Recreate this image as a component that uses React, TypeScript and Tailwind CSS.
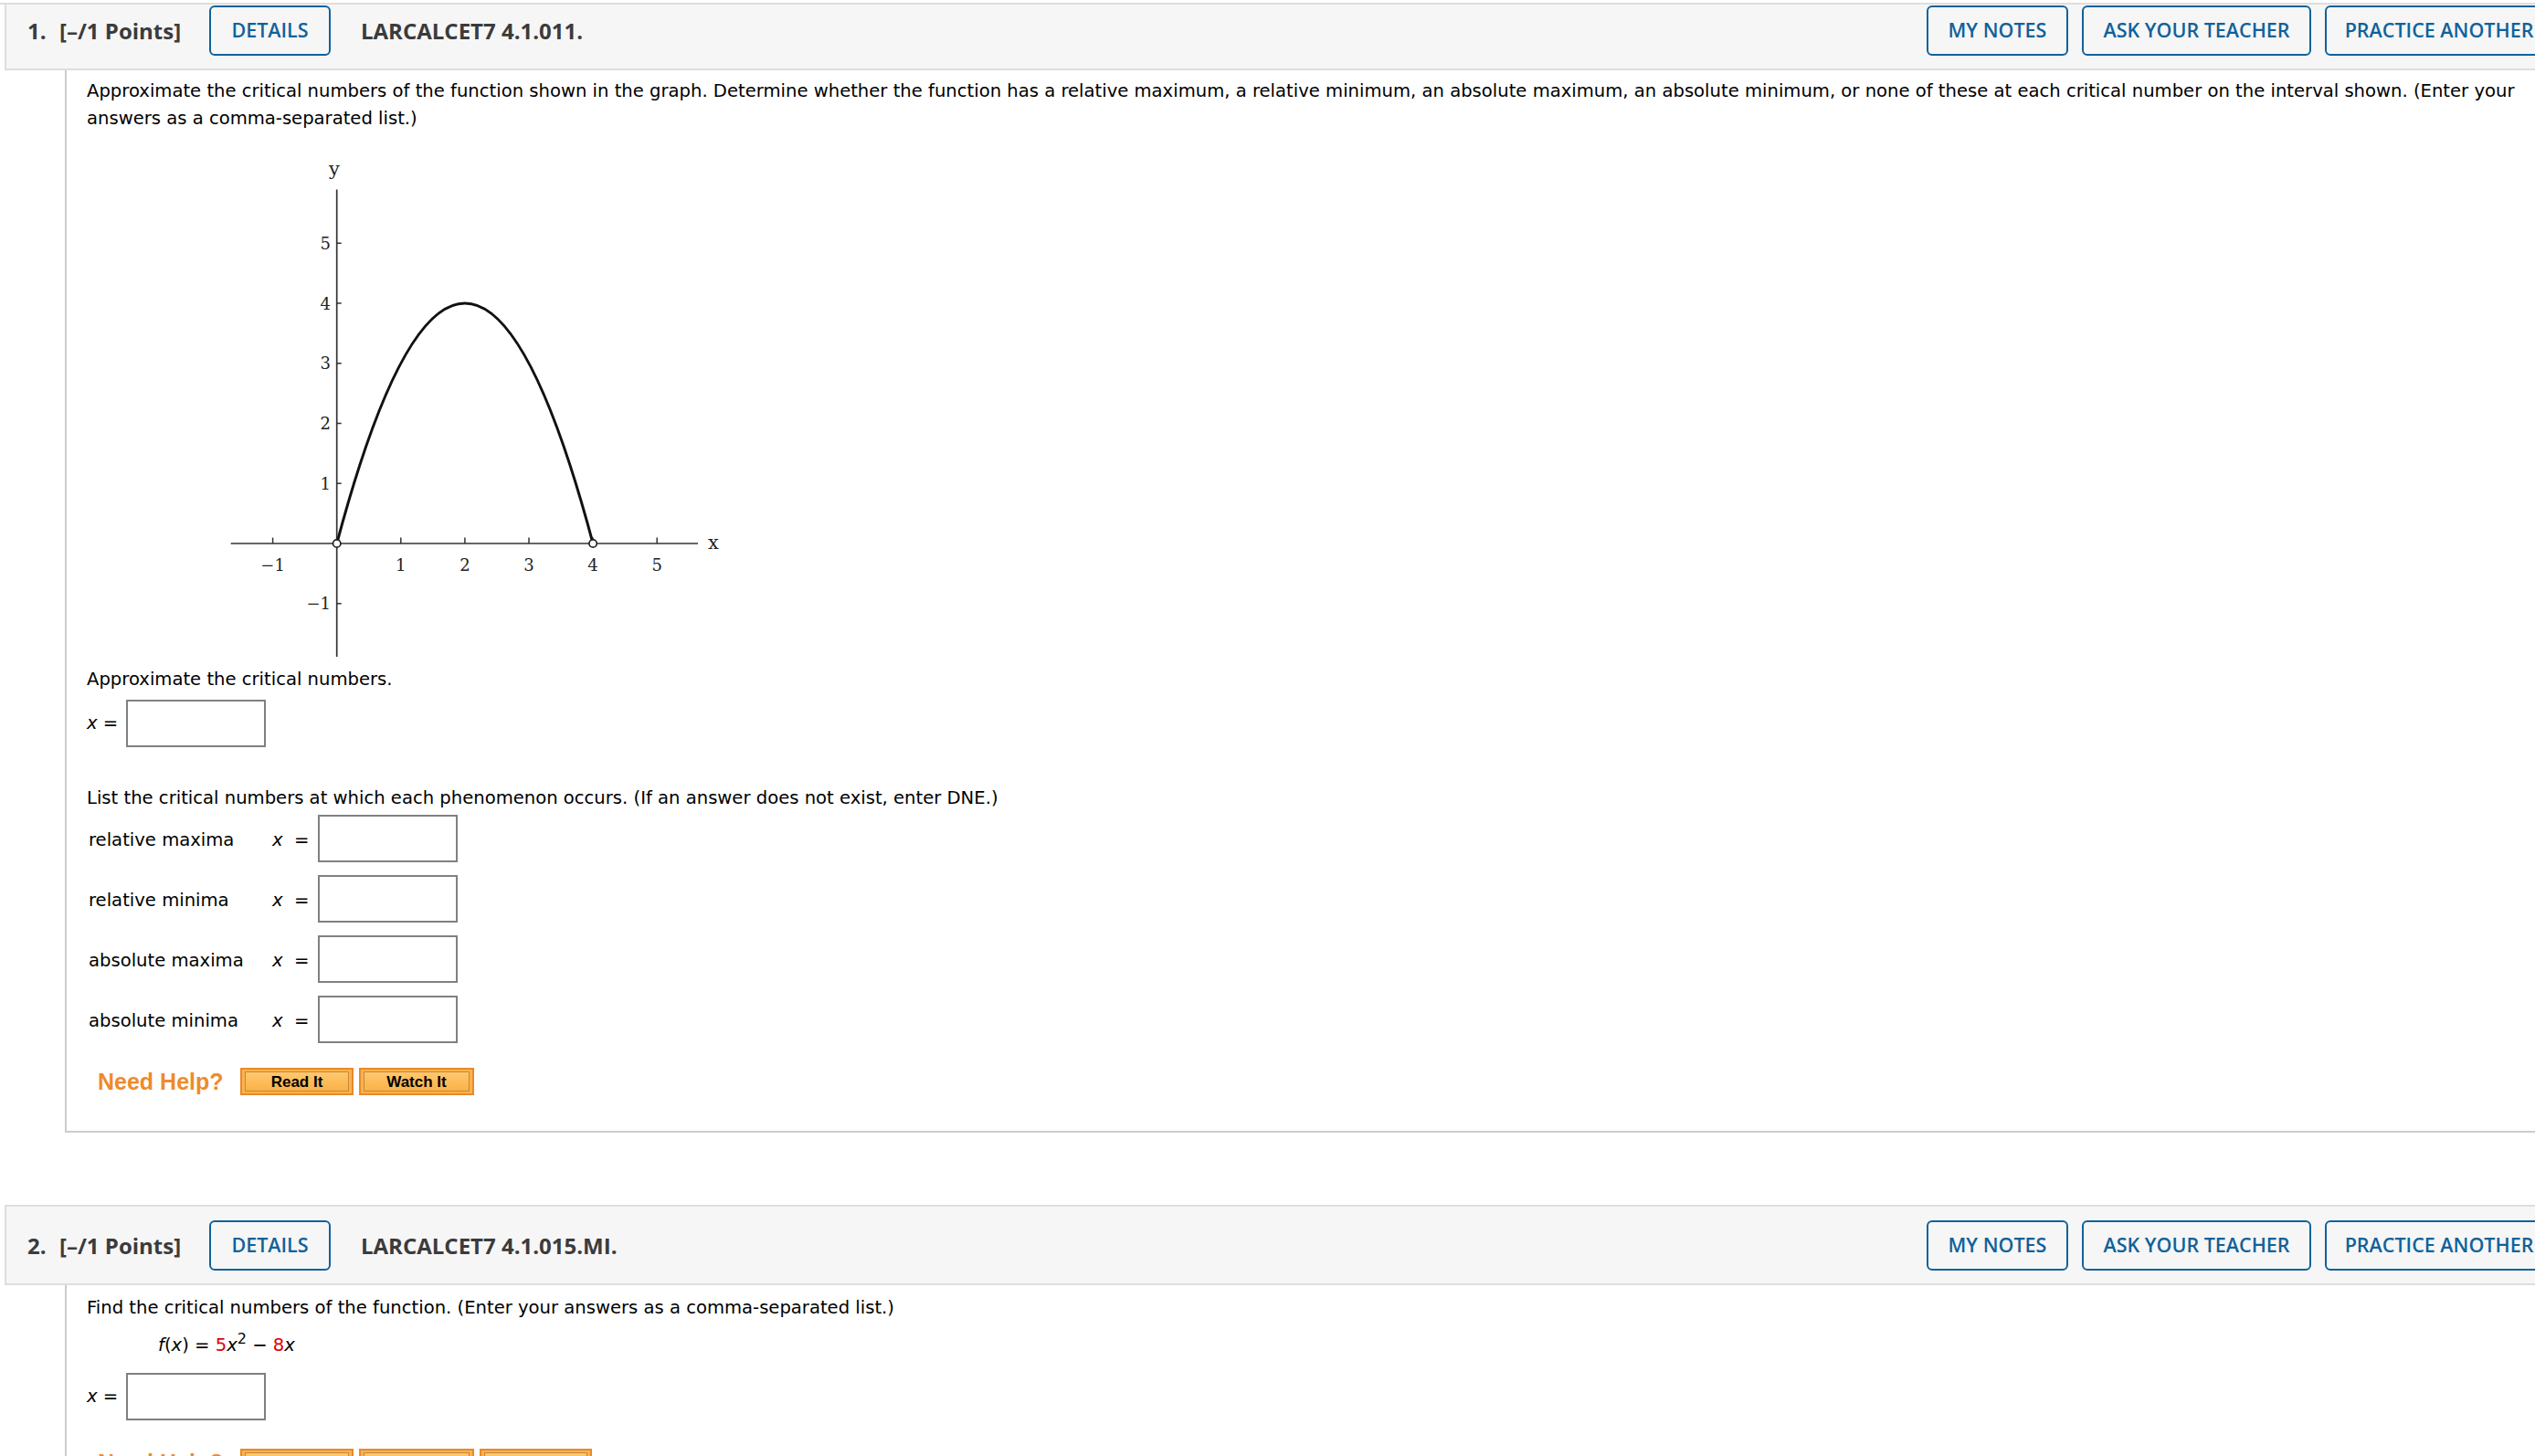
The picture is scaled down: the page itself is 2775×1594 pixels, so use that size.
import React from "react";

const X = (v: number) => 368.7 + 70.1 * v;
const Y = (v: number) => 595 - 65.75 * v;

const OutlineButton = ({ label, w }: { label: string; w: string }) => (
  <button
    className={`${w} h-[55px] shrink-0 rounded-[6px] border-2 border-[#0f629b] bg-[#f6f6f6] text-[21.5px] font-semibold text-[#0f629b]`}
  >
    {label}
  </button>
);

const QuestionHeader = ({
  num,
  code,
  top,
}: {
  num: number;
  code: string;
  top?: boolean;
}) => (
  <div
    className={`ml-[5px] flex items-center whitespace-nowrap border-b-2 border-l-2 border-[#dedede] bg-[#f6f6f6] pb-[14px] pl-[23px] pr-[30px] font-['Open_Sans',sans-serif] ${
      top ? "pt-px" : "mt-[79px] border-t-2 pt-[15px]"
    }`}
  >
    <span className="w-[35px] text-[24px] font-bold text-[#3b3b3b]">{num}.</span>
    <span className="w-[164px] text-[24px] font-bold text-[#3b3b3b]">[–/1 Points]</span>
    <OutlineButton label="DETAILS" w="w-[133px]" />
    <span className="ml-[33px] text-[24px] font-bold text-[#3b3b3b]">{code}</span>
    <div className="ml-auto flex gap-[15px]">
      <OutlineButton label="MY NOTES" w="w-[155px]" />
      <OutlineButton label="ASK YOUR TEACHER" w="w-[251px]" />
      <OutlineButton label="PRACTICE ANOTHER" w="w-[250px]" />
    </div>
  </div>
);

const AnswerBox = () => (
  <div className="h-[52px] w-[153px] shrink-0 border-2 border-[#808080] bg-white" />
);

const XEquals = ({ className = "" }: { className?: string }) => (
  <div className={`flex items-center ${className}`}>
    <span className="w-[43px]">
      <i>x</i> =
    </span>
    <AnswerBox />
  </div>
);

const HelpButton = ({ label, w }: { label: string; w: string }) => (
  <div className={`${w} h-[30px] border-2 border-[#e9892b] bg-[#fbb34c] px-[3px] py-[2px]`}>
    <div className="flex h-full items-center justify-center border border-[#c3873e] bg-linear-to-b from-[#fec86d] to-[#fbb146] font-['Liberation_Sans',Arial,sans-serif] text-[17px] font-bold leading-none text-black">
      {label}
    </div>
  </div>
);

const NeedHelp = ({ master, className = "" }: { master?: boolean; className?: string }) => (
  <div className={`flex items-center pl-[12px] ${className}`}>
    <span className="w-[156px] font-['Liberation_Sans',Arial,sans-serif] text-[25px] font-bold leading-[30px] text-[#ef8a2b]">
      Need Help?
    </span>
    <div className="flex gap-[6px]">
      <HelpButton label="Read It" w="w-[124px]" />
      <HelpButton label="Watch It" w="w-[126px]" />
      {master && <HelpButton label="Master It" w="w-[123px]" />}
    </div>
  </div>
);

const Graph = () => {
  const xs = [-1, 1, 2, 3, 4, 5];
  const ys = [-1, 1, 2, 3, 4, 5];
  return (
    <svg width="700" height="584" className="block">
      <g transform="translate(-95 -145)" fontFamily="'DejaVu Serif', serif" fill="#222">
        <line x1="252.7" y1={Y(0)} x2="764" y2={Y(0)} stroke="#333" strokeWidth="1.7" />
        <line x1={X(0)} y1="207.5" x2={X(0)} y2="719" stroke="#333" strokeWidth="1.7" />
        {xs.map((v) => (
          <g key={`x${v}`}>
            <line x1={X(v)} y1={Y(0)} x2={X(v)} y2={Y(0) - 6.4} stroke="#333" strokeWidth="1.5" />
            <text x={X(v)} y="625" fontSize="18" textAnchor="middle">
              {v < 0 ? `−${-v}` : v}
            </text>
          </g>
        ))}
        {ys.map((v) => (
          <g key={`y${v}`}>
            <line x1={X(0)} y1={Y(v)} x2={X(0) + 5} y2={Y(v)} stroke="#333" strokeWidth="1.5" />
            <text x="362" y={Y(v) + 6.5} fontSize="18" textAnchor="end">
              {v < 0 ? `−${-v}` : v}
            </text>
          </g>
        ))}
        <text x="366" y="192" fontSize="21" textAnchor="middle">
          y
        </text>
        <text x="781" y="601" fontSize="21" textAnchor="middle">
          x
        </text>
        <path
          d={`M ${X(0)} ${Y(0)} Q ${X(2)} ${Y(8)} ${X(4)} ${Y(0)}`}
          fill="none"
          stroke="#111"
          strokeWidth="3"
        />
        <circle cx={X(0)} cy={Y(0)} r="4.2" fill="white" stroke="#222" strokeWidth="1.7" />
        <circle cx={X(4)} cy={Y(0)} r="4.2" fill="white" stroke="#222" strokeWidth="1.7" />
      </g>
    </svg>
  );
};

const phenomena = ["relative maxima", "relative minima", "absolute maxima", "absolute minima"];

export default function App() {
  return (
    <div className="h-screen w-screen overflow-hidden bg-white">
      <div className="w-[2825px]">
        <div className="mt-[3px] h-[2px] bg-[#dddddd]" />
        <QuestionHeader num={1} code="LARCALCET7 4.1.011." top />

        <div className="ml-[71px] border-b-2 border-l-2 border-[#cccccc] pb-[39px] pl-[22px] pt-[8px] font-['DejaVu_Sans',Verdana,sans-serif] text-[19.6px] leading-[30px] text-black">
          <p className="whitespace-nowrap">
            Approximate the critical numbers of the function shown in the graph. Determine whether the
            function has a relative maximum, a relative minimum, an absolute maximum, an absolute minimum,
            or none of these at each critical number on the interval shown. (Enter your
            <br />
            answers as a comma-separated list.)
          </p>
          <Graph />
          <p>Approximate the critical numbers.</p>
          <XEquals className="mt-[7px]" />

          <p className="mt-[41px]">
            List the critical numbers at which each phenomenon occurs. (If an answer does not exist, enter
            DNE.)
          </p>
          <div className="mt-[3px] flex flex-col gap-[14px]">
            {phenomena.map((p) => (
              <div key={p} className="flex items-center">
                <span className="w-[203px] pl-[2px] pt-[4px]">{p}</span>
                <span className="w-[24px] pt-[4px] italic">x</span>
                <span className="w-[26px] pt-[4px]">=</span>
                <AnswerBox />
              </div>
            ))}
          </div>
          <NeedHelp className="mt-[27px]" />
        </div>

        <QuestionHeader num={2} code="LARCALCET7 4.1.015.MI." />
        <div className="ml-[71px] border-l-2 border-[#cccccc] pb-[40px] pl-[22px] pt-[9.5px] font-['DejaVu_Sans',Verdana,sans-serif] text-[19.6px] leading-[30px] text-black">
          <p>Find the critical numbers of the function. (Enter your answers as a comma-separated list.)</p>
          <p className="mt-[11px] pl-[78px]">
            <i>f</i>(<i>x</i>) = <span className="text-[#e00000]">5</span>
            <i>x</i>
            <sup className="text-[16px]">2</sup> − <span className="text-[#e00000]">8</span>
            <i>x</i>
          </p>
          <XEquals className="mt-[15px]" />
          <NeedHelp master className="mt-[31px]" />
        </div>
      </div>
    </div>
  );
}
